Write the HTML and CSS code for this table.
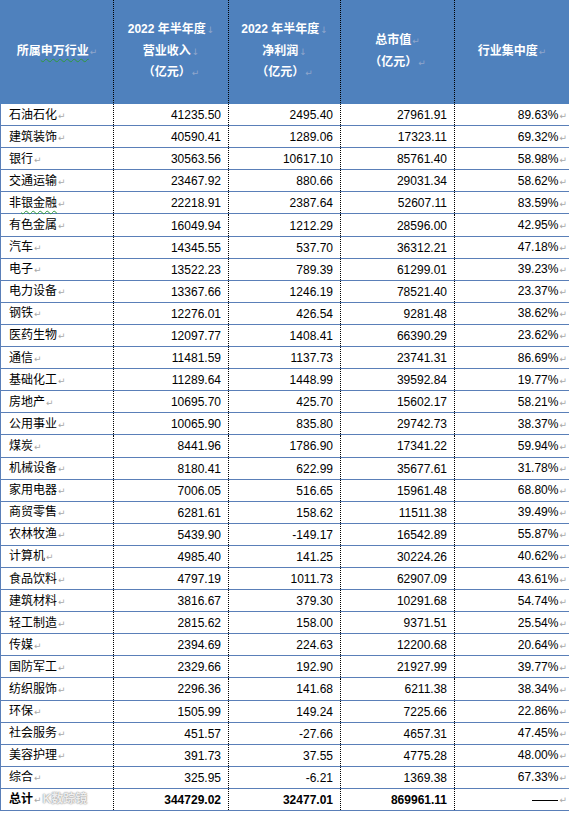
FILE: index.html
```html
<!DOCTYPE html>
<html lang="zh">
<head>
<meta charset="utf-8">
<link rel="stylesheet" href="styles.css">
</head>
<body>
<table class="grid">
<colgroup><col class="c1"><col class="c2"><col class="c3"><col class="c4"><col class="c5"></colgroup>
<thead>
<tr>
<th>所属<span class="wavy">申万行业</span><span class="pm">↵</span></th>
<th>2022 年半年度<span class="lb">↓</span><br>营业收入<span class="lb">↓</span><br>（亿元）<span class="pm">↵</span></th>
<th>2022 年半年度<span class="lb">↓</span><br>净利润<span class="lb">↓</span><br>（亿元）<span class="pm">↵</span></th>
<th>总市值<span class="pm">↵</span><br>（亿元）<span class="pm">↵</span></th>
<th>行业集中度<span class="pm">↵</span></th>
</tr>
</thead>
<tbody>
<tr><td class="name">石油石化<span class="pm">↵</span></td><td>41235.50</td><td>2495.40</td><td>27961.91</td><td class="pct">89.63%<span class="pm">↵</span></td></tr>
<tr><td class="name">建筑装饰<span class="pm">↵</span></td><td>40590.41</td><td>1289.06</td><td>17323.11</td><td class="pct">69.32%<span class="pm">↵</span></td></tr>
<tr><td class="name">银行<span class="pm">↵</span></td><td>30563.56</td><td>10617.10</td><td>85761.40</td><td class="pct">58.98%<span class="pm">↵</span></td></tr>
<tr><td class="name">交通运输<span class="pm">↵</span></td><td>23467.92</td><td>880.66</td><td>29031.34</td><td class="pct">58.62%<span class="pm">↵</span></td></tr>
<tr><td class="name">非<span class="wavy">银金融</span><span class="pm">↵</span></td><td>22218.91</td><td>2387.64</td><td>52607.11</td><td class="pct">83.59%<span class="pm">↵</span></td></tr>
<tr><td class="name">有色金属<span class="pm">↵</span></td><td>16049.94</td><td>1212.29</td><td>28596.00</td><td class="pct">42.95%<span class="pm">↵</span></td></tr>
<tr><td class="name">汽车<span class="pm">↵</span></td><td>14345.55</td><td>537.70</td><td>36312.21</td><td class="pct">47.18%<span class="pm">↵</span></td></tr>
<tr><td class="name">电子<span class="pm">↵</span></td><td>13522.23</td><td>789.39</td><td>61299.01</td><td class="pct">39.23%<span class="pm">↵</span></td></tr>
<tr><td class="name">电力设备<span class="pm">↵</span></td><td>13367.66</td><td>1246.19</td><td>78521.40</td><td class="pct">23.37%<span class="pm">↵</span></td></tr>
<tr><td class="name">钢铁<span class="pm">↵</span></td><td>12276.01</td><td>426.54</td><td>9281.48</td><td class="pct">38.62%<span class="pm">↵</span></td></tr>
<tr><td class="name">医药生物<span class="pm">↵</span></td><td>12097.77</td><td>1408.41</td><td>66390.29</td><td class="pct">23.62%<span class="pm">↵</span></td></tr>
<tr><td class="name">通信<span class="pm">↵</span></td><td>11481.59</td><td>1137.73</td><td>23741.31</td><td class="pct">86.69%<span class="pm">↵</span></td></tr>
<tr><td class="name">基础化工<span class="pm">↵</span></td><td>11289.64</td><td>1448.99</td><td>39592.84</td><td class="pct">19.77%<span class="pm">↵</span></td></tr>
<tr><td class="name">房地产<span class="pm">↵</span></td><td>10695.70</td><td>425.70</td><td>15602.17</td><td class="pct">58.21%<span class="pm">↵</span></td></tr>
<tr><td class="name">公用事业<span class="pm">↵</span></td><td>10065.90</td><td>835.80</td><td>29742.73</td><td class="pct">38.37%<span class="pm">↵</span></td></tr>
<tr><td class="name">煤炭<span class="pm">↵</span></td><td>8441.96</td><td>1786.90</td><td>17341.22</td><td class="pct">59.94%<span class="pm">↵</span></td></tr>
<tr><td class="name">机械设备<span class="pm">↵</span></td><td>8180.41</td><td>622.99</td><td>35677.61</td><td class="pct">31.78%<span class="pm">↵</span></td></tr>
<tr><td class="name">家用电器<span class="pm">↵</span></td><td>7006.05</td><td>516.65</td><td>15961.48</td><td class="pct">68.80%<span class="pm">↵</span></td></tr>
<tr><td class="name">商贸零售<span class="pm">↵</span></td><td>6281.61</td><td>158.62</td><td>11511.38</td><td class="pct">39.49%<span class="pm">↵</span></td></tr>
<tr><td class="name">农林牧渔<span class="pm">↵</span></td><td>5439.90</td><td>-149.17</td><td>16542.89</td><td class="pct">55.87%<span class="pm">↵</span></td></tr>
<tr><td class="name">计算机<span class="pm">↵</span></td><td>4985.40</td><td>141.25</td><td>30224.26</td><td class="pct">40.62%<span class="pm">↵</span></td></tr>
<tr><td class="name">食品饮料<span class="pm">↵</span></td><td>4797.19</td><td>1011.73</td><td>62907.09</td><td class="pct">43.61%<span class="pm">↵</span></td></tr>
<tr><td class="name">建筑材料<span class="pm">↵</span></td><td>3816.67</td><td>379.30</td><td>10291.68</td><td class="pct">54.74%<span class="pm">↵</span></td></tr>
<tr><td class="name">轻工制造<span class="pm">↵</span></td><td>2815.62</td><td>158.00</td><td>9371.51</td><td class="pct">25.54%<span class="pm">↵</span></td></tr>
<tr><td class="name">传媒<span class="pm">↵</span></td><td>2394.69</td><td>224.63</td><td>12200.68</td><td class="pct">20.64%<span class="pm">↵</span></td></tr>
<tr><td class="name">国防军工<span class="pm">↵</span></td><td>2329.66</td><td>192.90</td><td>21927.99</td><td class="pct">39.77%<span class="pm">↵</span></td></tr>
<tr><td class="name">纺织服饰<span class="pm">↵</span></td><td>2296.36</td><td>141.68</td><td>6211.38</td><td class="pct">38.34%<span class="pm">↵</span></td></tr>
<tr><td class="name">环保<span class="pm">↵</span></td><td>1505.99</td><td>149.24</td><td>7225.66</td><td class="pct">22.86%<span class="pm">↵</span></td></tr>
<tr><td class="name">社会服务<span class="pm">↵</span></td><td>451.57</td><td>-27.66</td><td>4657.31</td><td class="pct">47.45%<span class="pm">↵</span></td></tr>
<tr><td class="name">美容护理<span class="pm">↵</span></td><td>391.73</td><td>37.55</td><td>4775.28</td><td class="pct">48.00%<span class="pm">↵</span></td></tr>
<tr><td class="name">综合<span class="pm">↵</span></td><td>325.95</td><td>-6.21</td><td>1369.38</td><td class="pct">67.33%<span class="pm">↵</span></td></tr>
<tr class="total"><td class="name">总计<span class="pm">↵</span><span class="mark">K数踪镜</span></td><td>344729.02</td><td>32477.01</td><td>869961.11</td><td class="pct"><span class="dash"></span><span class="pm">↵</span></td></tr>
</tbody>
</table>
</body>
</html>
```
FILE: styles.css
```css
html, body {
  margin: 0;
  padding: 0;
  background: #ffffff;
}

.grid {
  border-collapse: collapse;
  table-layout: fixed;
  width: 569px;
  font-family: "Liberation Sans", "Noto Sans CJK SC", sans-serif;
  font-size: 12px;
  color: #000;
}

.c1 { width: 113px; }
.c2 { width: 115px; }
.c3 { width: 112px; }
.c4 { width: 114px; }
.c5 { width: 115px; }

.grid th {
  height: 103px;
  padding: 0;
  background: #4f81bd;
  color: #ffffff;
  font-family: "Liberation Sans", "Noto Sans CJK SC", sans-serif;
  font-weight: bold;
  font-size: 12px;
  line-height: 20.5px;
  text-align: center;
  vertical-align: middle;
  border-left: 1px dotted #000;
  border-bottom: 1px solid #4f81bd;
}

.grid th:first-child { border-left: 1px solid #4f81bd; }
.grid th:last-child { border-right: 1px solid #4f81bd; }

.grid td {
  height: 20.1px;
  padding: 1px 7px 0 0;
  text-align: right;
  vertical-align: middle;
  line-height: 16px;
  border-left: 1px dotted #000;
  border-bottom: 1px solid #5a7fb8;
  white-space: nowrap;
}

.grid td.name {
  text-align: left;
  padding: 1px 0 0 8px;
  border-left: 1px solid #5a7fb8;
}

.grid td.pct {
  padding-right: 2px;
  border-right: 1px solid #5a7fb8;
}

.pm {
  font-family: "DejaVu Sans", sans-serif;
  font-size: 9px;
  color: #a8a8a8;
  font-weight: normal;
  margin-left: 1px;
}

.grid th .pm, .grid th .lb {
  color: #8fa6cc;
}

.lb {
  font-family: "DejaVu Sans", sans-serif;
  font-size: 9px;
  font-weight: normal;
  margin-left: 1px;
}

.wavy {
  text-decoration: underline wavy #2e9a3a;
  text-decoration-thickness: 1px;
  text-underline-offset: 3px;
}

.total td {
  font-weight: bold;
}

.mark {
  margin-left: 1px;
  font-weight: bold;
  font-size: 12px;
  color: rgba(255, 255, 255, 0.85);
  text-shadow: 0 0 1px #888, 0 0 2px #aaa;
}

.dash {
  display: inline-block;
  width: 26px;
  height: 0;
  border-top: 1px solid #000;
  vertical-align: middle;
}
```
